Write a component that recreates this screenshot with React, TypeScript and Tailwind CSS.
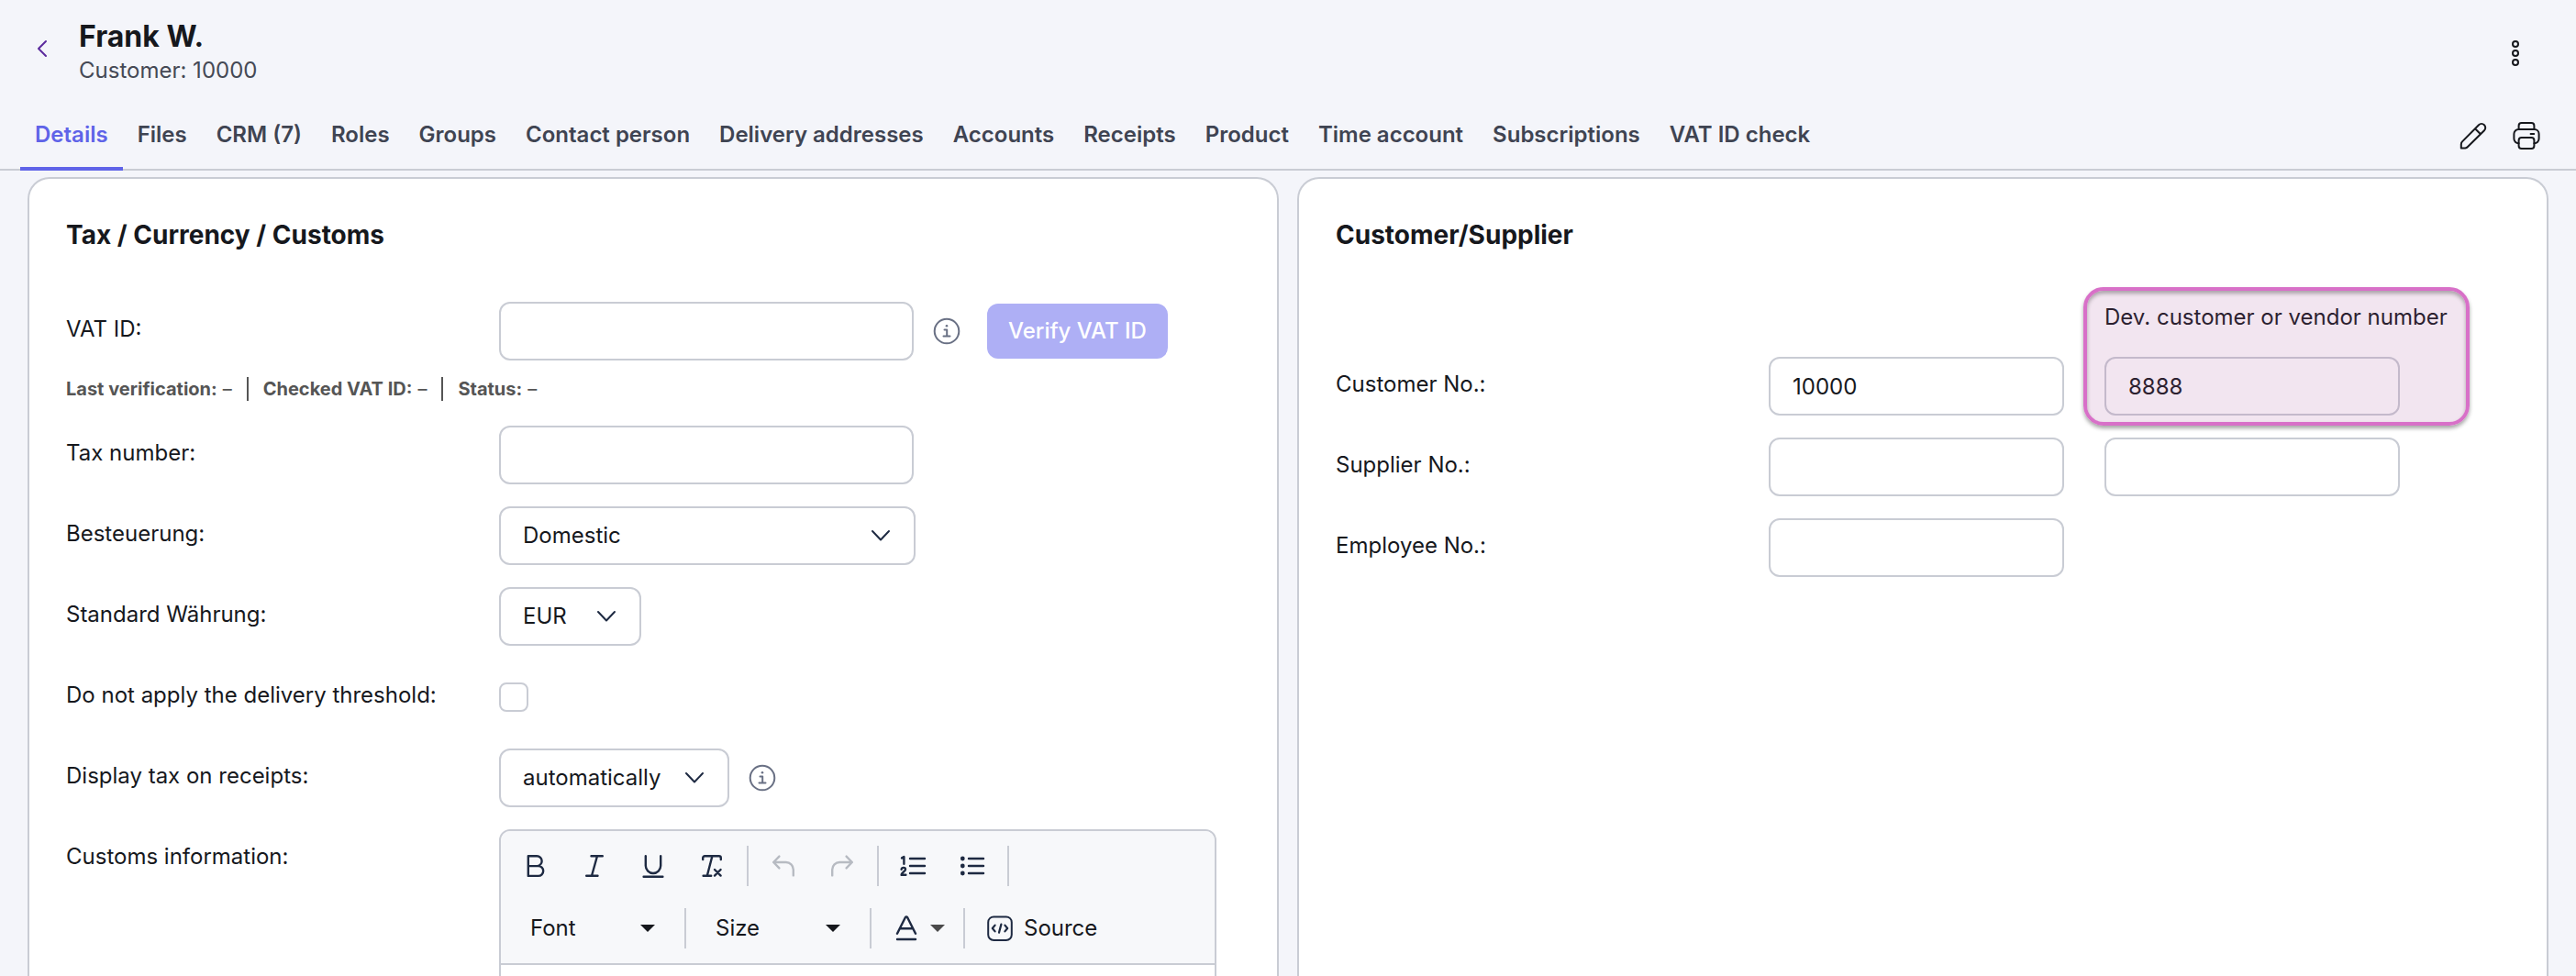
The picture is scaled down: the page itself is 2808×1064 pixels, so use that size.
import { useState } from "react";
import type { InputHTMLAttributes, ReactNode } from "react";

const tabs = [
  "Details",
  "Files",
  "CRM (7)",
  "Roles",
  "Groups",
  "Contact person",
  "Delivery addresses",
  "Accounts",
  "Receipts",
  "Product",
  "Time account",
  "Subscriptions",
  "VAT ID check",
];

function Icon({
  size = 32,
  width = 2,
  className = "",
  children,
}: {
  size?: number;
  width?: number;
  className?: string;
  children: ReactNode;
}) {
  return (
    <svg
      width={size}
      height={size}
      viewBox={`0 0 ${size} ${size}`}
      fill="none"
      stroke="currentColor"
      strokeWidth={width}
      strokeLinecap="round"
      strokeLinejoin="round"
      className={`shrink-0 ${className}`}
      aria-hidden="true"
    >
      {children}
    </svg>
  );
}

function InfoButton({ label }: { label: string }) {
  return (
    <button type="button" aria-label={label} className="ml-5 text-[#697084]">
      <Icon>
        <circle cx="16" cy="16" r="13.3" />
        <path d="M13.5 14.5h2.7v7M12.5 21.5h7" />
        <circle cx="16" cy="10.2" r="1.3" fill="currentColor" stroke="none" />
      </Icon>
    </button>
  );
}

function Field({
  label,
  htmlFor,
  children,
}: {
  label: string;
  htmlFor: string;
  children: ReactNode;
}) {
  return (
    <div className="grid grid-cols-[472px_1fr]">
      <label htmlFor={htmlFor} className="h-16 pt-3.5 leading-8">
        {label}
      </label>
      <div className="flex min-h-16 items-center">{children}</div>
    </div>
  );
}

function TextInput({
  size,
  ...props
}: { size: "wide" | "number" } & Omit<
  InputHTMLAttributes<HTMLInputElement>,
  "size"
>) {
  return (
    <input
      type="text"
      className={`h-16 rounded-xl border-2 border-[#c9ccd4] bg-white px-6 ${
        size === "wide" ? "w-[452px]" : "w-[322px]"
      }`}
      {...props}
    />
  );
}

function SelectBox({
  id,
  width,
  options,
}: {
  id: string;
  width: string;
  options: string[];
}) {
  return (
    <div className={`relative ${width}`}>
      <select
        id={id}
        className="h-16 w-full appearance-none rounded-xl border-2 border-[#c9ccd4] bg-white px-6"
      >
        {options.map((option) => (
          <option key={option}>{option}</option>
        ))}
      </select>
      <Icon
        size={24}
        className="pointer-events-none absolute top-5 right-[26px] text-[#1e2a42]"
      >
        <path d="M3 7l9 9.5L21 7" />
      </Icon>
    </div>
  );
}

function Divider() {
  return <span className="mx-1.5 h-11 w-0.5 bg-[#c9ccd4]" />;
}

function ToolButton({
  label,
  disabled,
  children,
}: {
  label: string;
  disabled?: boolean;
  children: ReactNode;
}) {
  return (
    <button
      type="button"
      aria-label={label}
      disabled={disabled}
      className="flex h-14 w-16 items-center justify-center text-[#1e2a42] disabled:text-[#b7bbc2]"
    >
      {children}
    </button>
  );
}

function Caret({ className = "" }: { className?: string }) {
  return (
    <svg width="16" height="8" viewBox="0 0 16 8" className={className}>
      <path d="M0 0h16L8 8z" fill="currentColor" />
    </svg>
  );
}

function ToolSelect({ label }: { label: string }) {
  return (
    <div className="relative w-[188px]">
      <select
        aria-label={label}
        className="h-14 w-full appearance-none bg-transparent px-[26px]"
      >
        <option>{label}</option>
      </select>
      <Caret className="pointer-events-none absolute top-6 right-[26px]" />
    </div>
  );
}

function Editor() {
  return (
    <div className="w-[782px] self-start overflow-hidden rounded-xl border-2 border-[#c9ccd4]">
      <div className="border-b-2 border-[#c9ccd4] bg-[#f7f8fa] px-1.5 py-1">
        <div className="flex h-[68px] items-center">
          <ToolButton label="Bold">
            <Icon width={2.4}>
              <path d="M7.8 5.2h9.4a5.4 5.4 0 0 1 0 10.9H7.8zM7.8 16.1h11a5.4 5.4 0 0 1 0 10.8h-11z" />
            </Icon>
          </ToolButton>
          <ToolButton label="Italic">
            <Icon width={2.4}>
              <path d="M12.5 5.2h12.3M7.2 26.8h12.3M19 5.2l-6 21.6" />
            </Icon>
          </ToolButton>
          <ToolButton label="Underline">
            <Icon width={2.4}>
              <path d="M7.8 5.2v10.6a8.2 8.2 0 0 0 16.4 0V5.2M5.6 27.8h20.8" />
            </Icon>
          </ToolButton>
          <ToolButton label="Remove format">
            <Icon width={2.4}>
              <path d="M6.2 9V7.2a2 2 0 0 1 2-2h15.6a2 2 0 0 1 2 2V9M16.4 5.2l-5.6 21.6M6.6 26.8h8.6M19 20l6.6 6.6M25.6 20L19 26.6" />
            </Icon>
          </ToolButton>
          <Divider />
          <ToolButton label="Undo" disabled>
            <Icon width={2.4}>
              <path d="M11.4 5.6L5.2 12l6.2 6.4M5.2 12h13.6a8 8 0 0 1 8 8v6.4" />
            </Icon>
          </ToolButton>
          <ToolButton label="Redo" disabled>
            <Icon width={2.4}>
              <path d="M20.6 5.6l6.2 6.4-6.2 6.4M26.8 12H13.2a8 8 0 0 0-8 8v6.4" />
            </Icon>
          </ToolButton>
          <Divider />
          <ToolButton label="Numbered list">
            <Icon width={2.4}>
              <path d="M12 8h16M12 16h16M12 24h16" />
              <path d="M3 7.4l2.4-1.4v7.8M2.6 19.8c.4-2.6 4.4-2.4 4.4 0 0 2-4.2 3.4-4.4 6h4.8" />
            </Icon>
          </ToolButton>
          <ToolButton label="Bulleted list">
            <Icon width={2.4}>
              <path d="M12 8h16M12 16h16M12 24h16" />
              <g fill="currentColor" stroke="none">
                <circle cx="5.3" cy="8" r="2.4" />
                <circle cx="5.3" cy="16" r="2.4" />
                <circle cx="5.3" cy="24" r="2.4" />
              </g>
            </Icon>
          </ToolButton>
          <Divider />
        </div>
        <div className="flex h-[68px] items-center">
          <ToolSelect label="Font" />
          <Divider />
          <ToolSelect label="Size" />
          <Divider />
          <button
            type="button"
            aria-label="Text color"
            className="flex h-14 w-[88px] items-center gap-2.5 pl-4 text-[#1e2a42]"
          >
            <Icon width={2.4}>
              <path d="M6 21.8L14.8 4.2q1.2-1.6 2.4 0L26 21.8M9 16.2h14M6 28h20" />
            </Icon>
            <Caret className="text-[#4b4b4b]" />
          </button>
          <Divider />
          <button type="button" className="flex h-14 items-center gap-2.5 px-4">
            <Icon width={2} className="text-[#1e2a42]">
              <rect x="3.2" y="3.4" width="25.6" height="25.6" rx="6" />
              <path
                d="M10.6 12.6l-2.8 3.4 2.8 3.4M21.4 12.6l2.8 3.4-2.8 3.4M17.4 11.6l-2.4 9"
                strokeWidth="2.2"
              />
            </Icon>
            Source
          </button>
        </div>
      </div>
      <textarea id="customs-info" className="block h-64 w-full resize-none bg-white p-6" />
    </div>
  );
}

function Card({ title, children }: { title: string; children: ReactNode }) {
  return (
    <section className="flex-1 rounded-t-3xl border-2 border-b-0 border-[#c9ccd4] bg-white px-10 pt-[43px]">
      <h2 className="text-[28px] leading-9 font-bold">{title}</h2>
      {children}
    </section>
  );
}

function VerificationStatus() {
  const items = ["Last verification:", "Checked VAT ID:", "Status:"];

  return (
    <div className="mt-[18px] mb-[27px] flex h-[26px] items-center text-xl text-[#555]">
      {items.map((item, index) => (
        <div
          key={item}
          className={`flex h-full items-center gap-1.5 ${
            index > 0 ? "ml-4 border-l-2 border-[#555] pl-4" : ""
          }`}
        >
          <strong className="font-bold">{item}</strong>
          <span>–</span>
        </div>
      ))}
    </div>
  );
}

export default function App() {
  const [activeTab, setActiveTab] = useState("Details");

  return (
    <div className="flex h-screen flex-col overflow-hidden bg-[#f4f5fa] font-[Inter,sans-serif] text-2xl text-[#16181d]">
      <header>
        <div className="flex items-start pt-5 pr-[50px] pb-[18px] pl-[30px]">
          <a href="#customers" aria-label="Back" className="mt-[17px] text-[#5b2a9d]">
            <Icon>
              <path d="M20 8l-8 8 8 8" />
            </Icon>
          </a>
          <div className="ml-6">
            <h1 className="text-[32px] leading-10 font-bold">Frank W.</h1>
            <p className="leading-[34px] text-[#454955]">Customer: 10000</p>
          </div>
          <button type="button" aria-label="More actions" className="mt-[22px] ml-auto">
            <Icon>
              <circle cx="16" cy="6" r="3" />
              <circle cx="16" cy="16" r="3" />
              <circle cx="16" cy="26" r="3" />
            </Icon>
          </button>
        </div>
        <div className="flex h-[74px] border-b-2 border-[#c9ccd4] pr-[38px] pl-[22px]">
          <nav className="flex">
            {tabs.map((tab) => (
              <button
                key={tab}
                type="button"
                onClick={() => setActiveTab(tab)}
                className={`-mb-0.5 border-b-4 px-4 font-semibold ${
                  tab === activeTab
                    ? "border-[#5f63e8] text-[#5f63e8]"
                    : "border-transparent text-[#3f4452]"
                }`}
              >
                {tab}
              </button>
            ))}
          </nav>
          <div className="ml-auto flex items-center gap-[26px]">
            <button type="button" aria-label="Edit">
              <Icon>
                <path d="M2.8 29.4v-4.2a4 4 0 0 1 1.2-2.8L22 4.2a4.2 4.2 0 0 1 6 6L10 28a4 4 0 0 1-2.8 1.4zM18 8.2l6 6" />
              </Icon>
            </button>
            <button type="button" aria-label="Print">
              <Icon>
                <path d="M7.6 9V5a3 3 0 0 1 3-3h10.8a3 3 0 0 1 3 3v4M7.6 24.2A5 5 0 0 1 2.4 19v-5a5 5 0 0 1 5-5h17.2a5 5 0 0 1 5 5v5a5 5 0 0 1-5.2 5.2M20.6 14h3.6" />
                <rect x="7.6" y="18" width="16.8" height="12" rx="3" />
              </Icon>
            </button>
          </div>
        </div>
      </header>

      <main className="flex flex-1 gap-5 px-[30px] pt-[7px]">
        <Card title="Tax / Currency / Customs">
          <form className="mt-[55px]">
            <Field label="VAT ID:" htmlFor="vat-id">
              <TextInput id="vat-id" size="wide" />
              <InfoButton label="About the VAT ID" />
              <button
                type="button"
                disabled
                className="ml-7 h-[60px] rounded-xl bg-[#aeaff5] px-[23px] font-medium text-white"
              >
                Verify VAT ID
              </button>
            </Field>
            <VerificationStatus />
            <div className="flex flex-col gap-6">
              <Field label="Tax number:" htmlFor="tax-number">
                <TextInput id="tax-number" size="wide" />
              </Field>
              <Field label="Besteuerung:" htmlFor="taxation">
                <SelectBox id="taxation" width="w-[454px]" options={["Domestic"]} />
              </Field>
              <Field label="Standard Währung:" htmlFor="currency">
                <SelectBox id="currency" width="w-[155px]" options={["EUR"]} />
              </Field>
              <Field label="Do not apply the delivery threshold:" htmlFor="threshold">
                <input
                  id="threshold"
                  type="checkbox"
                  className="size-8 appearance-none rounded-lg border-2 border-[#c9ccd4] bg-white"
                />
              </Field>
              <Field label="Display tax on receipts:" htmlFor="display-tax">
                <SelectBox id="display-tax" width="w-[251px]" options={["automatically"]} />
                <InfoButton label="About tax display" />
              </Field>
              <Field label="Customs information:" htmlFor="customs-info">
                <Editor />
              </Field>
            </div>
          </form>
        </Card>

        <Card title="Customer/Supplier">
          <form className="mt-14 flex flex-col gap-6">
            <div className="flex items-end">
              <div className="w-[838px]">
                <Field label="Customer No.:" htmlFor="customer-no">
                  <TextInput id="customer-no" size="number" defaultValue="10000" />
                </Field>
              </div>
              <div className="relative flex flex-col items-start gap-[27px]">
                <label htmlFor="dev-customer-no" className="leading-8">
                  Dev. customer or vendor number
                </label>
                <TextInput id="dev-customer-no" size="number" defaultValue="8888" />
                <div className="pointer-events-none absolute -top-[17px] -right-6 -bottom-[11px] -left-[23px] rounded-[22px] border-4 border-[#d870c8] bg-[rgba(168,82,155,0.15)] shadow-[0_3px_4px_rgba(0,0,0,0.35),inset_0_3px_4px_rgba(0,0,0,0.3)]" />
              </div>
            </div>
            <div className="flex">
              <div className="w-[838px]">
                <Field label="Supplier No.:" htmlFor="supplier-no">
                  <TextInput id="supplier-no" size="number" />
                </Field>
              </div>
              <TextInput id="dev-supplier-no" size="number" aria-label="Dev. supplier number" />
            </div>
            <Field label="Employee No.:" htmlFor="employee-no">
              <TextInput id="employee-no" size="number" />
            </Field>
          </form>
        </Card>
      </main>
    </div>
  );
}
